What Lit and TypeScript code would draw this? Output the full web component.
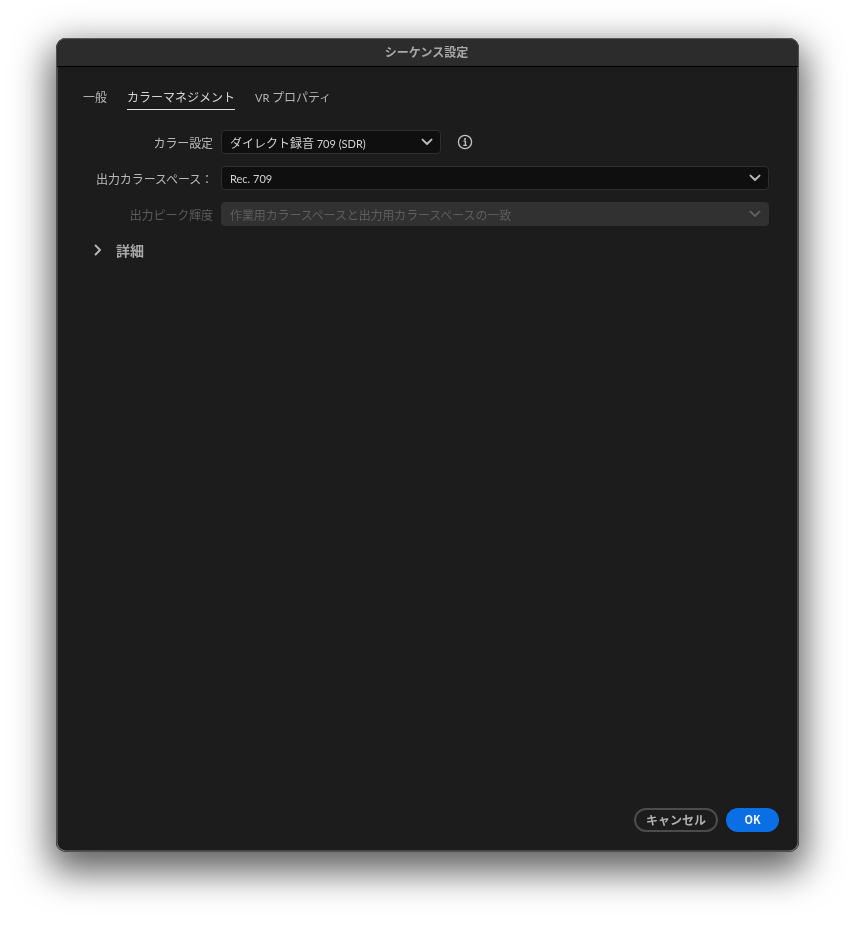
import { LitElement, html, css } from "lit";
import { customElement } from "lit/decorators.js";

const chevron = html`<svg class="chev" viewBox="0 0 12 8" width="12" height="8"><path d="M1.5 1.6 6 6 10.5 1.6" fill="none" stroke="currentColor" stroke-width="2" stroke-linecap="round" stroke-linejoin="round"/></svg>`;

@customElement("app-root")
export class AppRoot extends LitElement {
  static styles = css`
    :host {
      display: block;
      height: 926px;
      box-sizing: border-box;
      padding: 38px 56px 74px;
      background: #fff;
      font-family: "Noto Sans CJK JP", "Noto Sans", sans-serif;
      font-size: 12px;
      color: #c4c4c4;
      overflow: hidden;
    }
    .window {
      height: 814px;
      box-sizing: border-box;
      display: flex;
      flex-direction: column;
      background: #1c1c1c;
      border-radius: 10px;
      box-shadow:
        0 0 0 0.5px #2a2a2a inset,
        0 0 0 1.5px #747474 inset,
        0 14px 36px 6px rgba(0, 0, 0, 0.62);
      will-change: transform;
    }
    .title {
      height: 29px;
      flex: none;
      box-sizing: border-box;
      display: flex;
      align-items: center;
      justify-content: center;
      padding: 0 2px 2px 0;
      background: #2c2c2c;
      border-bottom: 1px solid #000;
      border-top: 1px solid #5c5c5c;
      font-weight: 700;
      color: #a8a8a8;
      margin: 0 1px;
      border-radius: 9px 9px 0 0;
    }
    .latin {
      font-family: Lato, "Noto Sans", sans-serif;
      font-size: 11px;
    }
    .body {
      flex: 1;
      display: flex;
      flex-direction: column;
      padding: 20px 20px 20px 27px;
    }
    .tabs {
      display: flex;
      gap: 20px;
      height: 24px;
    }
    .tab {
      height: 23px;
      line-height: 20px;
      color: #b4b4b4;
      box-sizing: border-box;
    }
    .tab.active {
      color: #d4d4d4;
      border-bottom: 1px solid #e0e0e0;
    }
    .form {
      margin-top: 19px;
      margin-right: 10px;
      display: grid;
      grid-template-columns: 130px 1fr;
      column-gap: 8px;
      row-gap: 12px;
      align-items: center;
    }
    .label {
      text-align: right;
      color: #b8b8b8;
      white-space: nowrap;
      letter-spacing: -0.1px;
    }
    .label.off {
      color: #5c5c5c;
    }
    .control {
      display: flex;
      align-items: center;
      gap: 16px;
    }
    .select {
      flex: 1;
      height: 24px;
      box-sizing: border-box;
      display: flex;
      align-items: center;
      justify-content: space-between;
      padding: 0 7px 0 8px;
      background: #0f0f0f;
      border: 1px solid #2e2e2e;
      border-radius: 4px;
      color: #d2d2d2;
    }
    .select.narrow {
      flex: none;
      width: 220px;
    }
    .select.off {
      background: #313131;
      border-color: #313131;
      color: #5e5e5e;
      letter-spacing: -0.12px;
    }
    .chev {
      display: block;
      color: #b8b8b8;
    }
    .select.off .chev {
      color: #606060;
    }
    .info {
      display: block;
      color: #c4c4c4;
    }
    .details {
      margin-top: 14px;
      margin-left: 11px;
      display: flex;
      align-items: center;
      gap: 14px;
      font-size: 14px;
      font-weight: 700;
      color: #a8a8a8;
    }
    .details svg {
      display: block;
      color: #b4b4b4;
    }
    .footer {
      margin-top: auto;
      display: flex;
      justify-content: flex-end;
      gap: 8px;
    }
    .btn {
      height: 24px;
      box-sizing: border-box;
      border-radius: 12px;
      display: flex;
      align-items: center;
      justify-content: center;
      font-weight: 700;
      padding-bottom: 2px;
    }
    .cancel {
      width: 84px;
      border: 2px solid #4c4c4c;
      color: #b0b0b0;
    }
    .ok {
      width: 53px;
      background: #0a6ee4;
      color: #f4f4f4;
      font-size: 11px;
    }
  `;

  render() {
    return html`
      <div class="window">
        <div class="title">シーケンス設定</div>
        <div class="body">
          <div class="tabs">
            <div class="tab">一般</div>
            <div class="tab active">カラーマネジメント</div>
            <div class="tab"><span class="latin">VR</span> プロパティ</div>
          </div>
          <div class="form">
            <div class="label">カラー設定</div>
            <div class="control">
              <div class="select narrow"><span>ダイレクト録音 <span class="latin">709 (SDR)</span></span>${chevron}</div>
              <svg class="info" viewBox="0 0 16 16" width="16" height="16">
                <circle cx="8" cy="8" r="6.6" fill="none" stroke="currentColor" stroke-width="1.3"/>
                <circle cx="8" cy="4.9" r="1" fill="currentColor"/>
                <path d="M6.5 7.2H8.4V11.2M6.3 11.4H9.8" fill="none" stroke="currentColor" stroke-width="1.3"/>
              </svg>
            </div>
            <div class="label">出力カラースペース：</div>
            <div class="control">
              <div class="select"><span class="latin">Rec. 709</span>${chevron}</div>
            </div>
            <div class="label off">出力ピーク輝度</div>
            <div class="control">
              <div class="select off"><span>作業用カラースペースと出力用カラースペースの一致</span>${chevron}</div>
            </div>
          </div>
          <div class="details">
            <svg viewBox="0 0 8 12" width="8" height="12"><path d="M1.6 1.5 6 6 1.6 10.5" fill="none" stroke="currentColor" stroke-width="2" stroke-linecap="round" stroke-linejoin="round"/></svg>
            <span>詳細</span>
          </div>
          <div class="footer">
            <div class="btn cancel">キャンセル</div>
            <div class="btn ok">OK</div>
          </div>
        </div>
      </div>
    `;
  }
}
